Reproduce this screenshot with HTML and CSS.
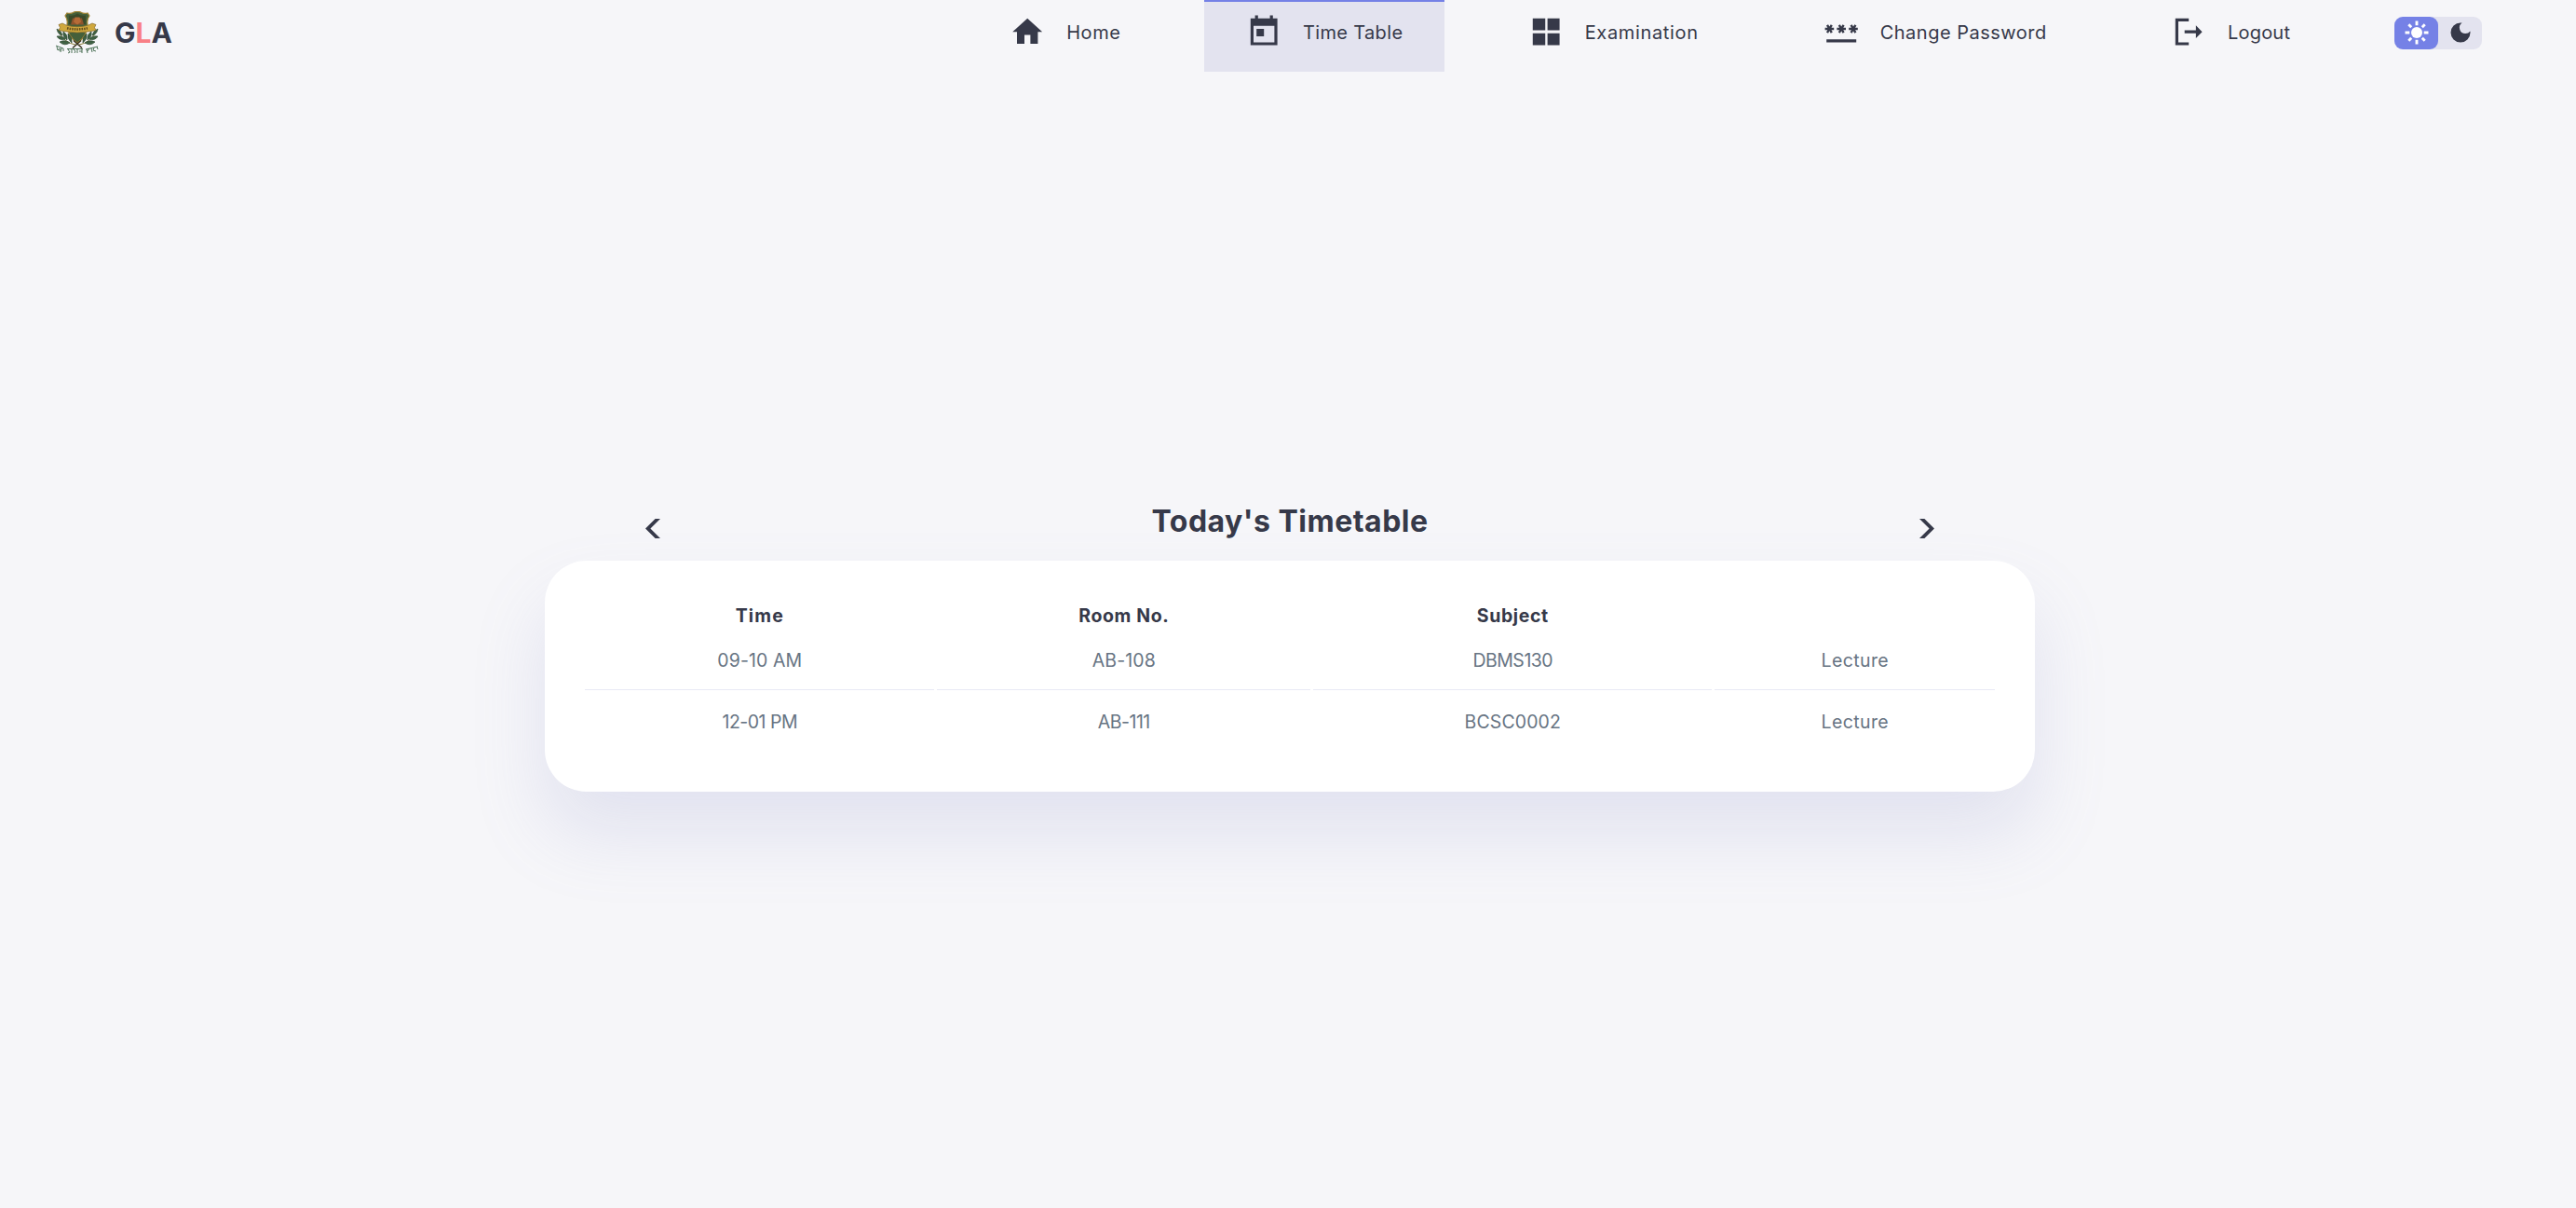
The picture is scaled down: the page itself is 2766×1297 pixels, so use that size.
FILE: index.html
```html
<!DOCTYPE html>
<html lang="en">
<head>
<meta charset="utf-8">
<title>GLA Time Table</title>
<link rel="stylesheet" href="styles.css">
</head>
<body>
<header class="header">
  <div class="brand">
    <svg class="emblem" viewBox="0 0 46 46">
      <defs>
        <g id="branch">
          <path d="M21 36Q9 34 3 22" fill="none" stroke="#8a7d3a" stroke-width="1"/>
          <g fill="#3f6043" stroke="#2f4a33" stroke-width=".7">
            <path d="M1 19q5 2 6 7-5-1-6-7z"/>
            <path d="M1 27q6-1 9 3-6 2-9-3z"/>
            <path d="M8 22q5 3 4 9-5-3-4-9z"/>
            <path d="M4 33q6-3 11 1-6 4-11-1z"/>
            <path d="M13 24q5 4 4 10-5-4-4-10z"/>
          </g>
        </g>
      </defs>
      <path d="M12 2q4 1 6.500-.5Q20 .5 23 .5t4.500 1q2.500 1.500 6.500.5l2 3q-3 4-2 9 0 13-11 20-11-7-11-20 1-5-2-9z" fill="#45603a" stroke="#a18435" stroke-width="1.200"/>
      <path d="M14 4.500q5 1 9-2 4 3 9 2V14H14z" fill="#3b4a2a"/>
      <path d="M18 7.500h10l2 7H16z" fill="#8f542c"/>
      <path d="M20.500 6.500h5l1.500 5-4 3-4-3z" fill="#b66b37"/>
      <use href="#branch"/>
      <use href="#branch" transform="matrix(-1 0 0 1 46 0)"/>
      <path d="M3 14.500l4-1.500 4 2q12 3.500 24 0l4-2 4 1.500-1.500 3 1.500 3-5 1q-15 3-30 0l-5-1 1.500-3z" fill="#d0a83d" stroke="#82682c" stroke-width=".7"/>
      <path d="M12 18.200q11 2.500 22 0" stroke="#65501f" stroke-width="2.600" stroke-dasharray="1.600 1" fill="none"/>
      <path d="M18 39.500l9-8M28 39.500l-9-8" stroke="#3b3522" stroke-width="1.600"/>
      <g fill="none" stroke="#4e7359" stroke-width="1">
        <path d="M0 37l8 3M1 38l1 4 2-2v3M6 39l-1 5M8 40v3"/>
        <path d="M12 40.500h17M13 41l2 3-2 1M17 41v4M19 41l2 2-1 2M23 41v4M25 43h3M28 41v4"/>
        <path d="M32 41l13-3M33 41l1 4M36 40l-2 3M38 40l1 4M41 39l-1 3 3 1M44 38l1 3"/>
      </g>
    </svg>
    <h1 class="brand-name">G<span class="danger">L</span>A</h1>
  </div>
  <nav class="nav">
    <a class="nav-link home">
      <svg class="icon" viewBox="0 0 24 24"><path d="M10 20v-6h4v6h5v-8h3L12 3 2 12h3v8z"/></svg>
      <span class="label">Home</span>
    </a>
    <a class="nav-link timetable active">
      <svg class="icon" viewBox="0 0 24 24"><path d="M21 3h-3V1h-2v2H8V1H6v2H3v18h18V3zm-2 16H5V8h14v11zM7 10h5v5H7z"/></svg>
      <span class="label">Time Table</span>
    </a>
    <a class="nav-link exam">
      <svg class="icon" viewBox="0 0 24 24"><path d="M3 3h8.400v8H3zM12.900 3H21v8h-8.100zM3 13h8.400v8H3zM12.900 13H21v8h-8.100z"/></svg>
      <span class="label">Examination</span>
    </a>
    <a class="nav-link password">
      <svg class="icon" viewBox="0 0 24 24"><path d="M2 17h20v2H2v-2zm1.150-4.050L4 11.470l.85 1.480 1.300-.75-.85-1.480H7v-1.500H5.300l.85-1.470L4.850 7 4 8.470 3.150 7l-1.300.75.85 1.470H1v1.500h1.700l-.85 1.480 1.300.75zm6.700-.75l1.300.75.85-1.480.85 1.480 1.300-.75-.85-1.480H15v-1.500h-1.700l.85-1.470-1.300-.75L12 8.470 11.150 7l-1.300.75.85 1.470H9v1.500h1.700l-.85 1.480zM23 9.220h-1.700l.85-1.470-1.300-.75L20 8.470 19.150 7l-1.300.75.85 1.470H17v1.500h1.700l-.85 1.480 1.300.75.850-1.480.85 1.480 1.300-.75-.85-1.480H23v-1.500z"/></svg>
      <span class="label">Change Password</span>
    </a>
    <a class="nav-link logout">
      <svg class="icon" viewBox="0 0 24 24"><path d="M3 3h9v2H5v14h7v2H3zM9.200 11h7.600V7.700L21 12l-4.200 4.300V13H9.200z"/></svg>
      <span class="label">Logout</span>
    </a>
  </nav>
  <div class="theme-toggle">
    <span class="mode selected">
      <svg class="sun" viewBox="-13 -13 26 26">
        <circle r="6"/>
        <path d="M0-12.500v4.800M0 12.500V7.700M-12.500 0h4.800M12.500 0H7.700M-8.700-8.700l2.900 2.900M8.700 8.700L5.800 5.800M-8.700 8.700l2.900-2.900M8.700-8.700L5.800-5.800"/>
      </svg>
    </span>
    <span class="mode">
      <svg class="moon" viewBox="0 0 24 24"><path d="M12 3a9 9 0 1 0 9 9c0-.46-.04-.92-.1-1.360a5.389 5.389 0 0 1-4.400 2.260 5.403 5.403 0 0 1-3.140-9.800c-.44-.06-.9-.1-1.360-.1z"/></svg>
    </span>
  </div>
</header>
<main class="main">
  <section class="day">
    <div class="day-head">
      <svg class="arrow" viewBox="0 0 16 21"><path d="M10.600 0H16L5.400 10.500 16 21h-5.400L0 10.500z"/></svg>
      <h2 class="title">Today's Timetable</h2>
      <svg class="arrow" viewBox="0 0 16 21"><path d="M5.400 0H0l10.600 10.500L0 21h5.400L16 10.500z"/></svg>
    </div>
    <div class="card">
      <table class="table">
        <colgroup><col class="col-time"><col class="col-room"><col class="col-subject"><col class="col-type"></colgroup>
        <thead>
          <tr><th class="wider">Time</th><th>Room No.</th><th>Subject</th><th></th></tr>
        </thead>
        <tbody>
          <tr><td>09-10 AM</td><td>AB-108</td><td class="tight">DBMS130</td><td class="wide">Lecture</td></tr>
          <tr><td class="tight">12-01 PM</td><td class="tight">AB-111</td><td>BCSC0002</td><td class="wide">Lecture</td></tr>
        </tbody>
      </table>
    </div>
  </section>
</main>
</body>
</html>
```
FILE: styles.css
```css
* { box-sizing: border-box; margin: 0; padding: 0; }

body {
  background: #f6f6f9;
  color: #363949;
  font-family: Inter, "Open Sans", sans-serif;
  min-height: 100vh;
  overflow: hidden;
}

.header {
  display: flex;
  align-items: flex-start;
  height: 77px;
  padding: 0 101px 0 60px;
}

.brand { display: flex; align-items: center; gap: 17px; height: 70px; margin-right: auto; }
.emblem { width: 46px; height: 46px; }
.brand-name { font-size: 30px; line-height: 36px; font-weight: 700; }
.danger { color: #f87f86; }

.nav { display: flex; gap: 44.8px; margin-right: 67px; }
.nav-link {
  display: flex;
  gap: 22.4px;
  height: 77px;
  padding: 15.4px 44.8px 0;
}
.nav-link.active { background: #e3e3ef; border-top: 2px solid #7581e6; padding-top: 13.4px; }
.icon { width: 38.4px; height: 38.4px; fill: #363949; }
.label { font-size: 20px; line-height: 40px; font-weight: 400; white-space: nowrap; }
.home .label { width: 58.600px; letter-spacing: .6px; }
.timetable .label { width: 107.600px; letter-spacing: .35px; }
.exam .label { width: 121.800px; letter-spacing: .65px; }
.password .label { width: 178.200px; letter-spacing: .5px; }
.logout .label { width: 67.200px; letter-spacing: .2px; }

.theme-toggle {
  display: flex;
  width: 94px;
  height: 35px;
  margin-top: 18px;
  border-radius: 9px;
  background: #e3e3ef;
}
.mode { display: flex; flex: 1; align-items: center; justify-content: center; border-radius: 9px; }
.mode.selected { background: #7581e6; }
.sun { width: 26px; height: 26px; margin-top: -1px; fill: #fff; stroke: #fff; stroke-width: 2.900; }
.sun circle { stroke: none; }
.moon { width: 28px; height: 28px; margin-top: -2px; fill: #363949; }

.main { display: flex; justify-content: center; padding-top: 460px; }
.day { width: 1600px; margin-left: 4px; }
.day-head {
  display: flex;
  justify-content: space-between;
  height: 65px;
  padding: 0 108px;
}
.arrow { width: 16px; height: 21px; margin-top: 20px; fill: #363949; }
.title { font-size: 32px; line-height: 45px; font-weight: 700; letter-spacing: .5px; }

.card {
  height: 248px;
  padding: 40.300px;
  border-radius: 44.800px;
  background: #fff;
  box-shadow: 0 44.800px 78px rgba(132, 139, 200, .18);
}
.table { width: 100%; table-layout: fixed; border-spacing: 3.200px; text-align: center; }
.col-time { width: 375px; }
.col-room { width: 401px; }
.col-subject { width: 428px; }
.col-type { width: 301px; }
th { height: 30.600px; padding-top: 1px; font-size: 19.500px; font-weight: 700; letter-spacing: .6px; }
td {
  height: 62px;
  font-size: 19.500px;
  color: #677483;
  letter-spacing: .1px;
  border-bottom: 1px solid rgba(132, 139, 200, .18);
}
tr:last-child td { padding-top: 1px; border: none; }
.tight { letter-spacing: -.5px; }
.wide { letter-spacing: .4px; }
.wider { letter-spacing: 1.100px; }
```
